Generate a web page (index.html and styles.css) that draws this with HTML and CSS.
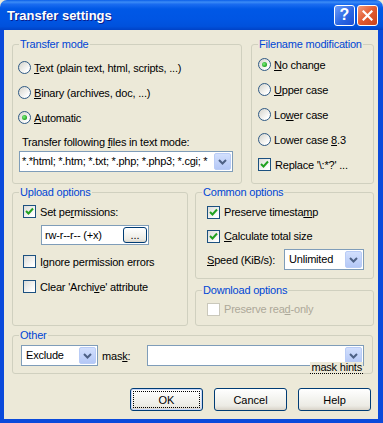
FILE: index.html
```html
<!DOCTYPE html>
<html lang="en">
<head>
    <meta charset="UTF-8">
    <title>Transfer settings</title>
    <link rel="stylesheet" href="styles.css">
</head>
<body>
    <div class="window">
        <div class="titlebar">
            <span class="title">Transfer settings</span>
            <div class="caption-buttons">
                <span class="cap-btn cap-help">?</span>
                <span class="cap-btn cap-close">
                    <svg width="11" height="11" viewBox="0 0 11 11"><path d="M1.5 1.5 L9.5 9.5 M9.5 1.5 L1.5 9.5" stroke="#fff" stroke-width="2.2" stroke-linecap="square"/></svg>
                </span>
            </div>
        </div>

        <div class="client">
            <!-- === Top row === -->
            <div class="row row-top">
                <fieldset class="group transfer-mode">
                    <legend>Transfer mode</legend>
                    <div class="body">
                        <div class="opt"><span class="radio"></span><span><u>T</u>ext (plain text, html, scripts, ...)</span></div>
                        <div class="opt"><span class="radio"></span><span><u>B</u>inary (archives, doc, ...)</span></div>
                        <div class="opt"><span class="radio on"><span class="dot"></span></span><span><u>A</u>utomatic</span></div>
                        <div class="field-label">Transfer following <u>f</u>iles in text mode:</div>
                        <div class="combo combo-mask">
                            <span class="combo-text">*.*html; *.htm; *.txt; *.php; *.php3; *.cgi; *</span>
                            <span class="drop"><svg width="9" height="6" viewBox="0 0 9 6"><path d="M1 1 L4.5 4.5 L8 1" fill="none" stroke="#4D6185" stroke-width="2"/></svg></span>
                        </div>
                    </div>
                </fieldset>

                <fieldset class="group filename">
                    <legend>Filename modification</legend>
                    <div class="body">
                        <div class="opt"><span class="radio on"><span class="dot"></span></span><span><u>N</u>o change</span></div>
                        <div class="opt"><span class="radio"></span><span><u>U</u>pper case</span></div>
                        <div class="opt"><span class="radio"></span><span>Lo<u>w</u>er case</span></div>
                        <div class="opt"><span class="radio"></span><span>Lower case <u>8</u>.3</span></div>
                        <div class="opt"><span class="check"><svg width="9" height="9" viewBox="0 0 9 9"><path d="M1 4 L3.5 6.5 L8 1.5" fill="none" stroke="#21A121" stroke-width="2"/></svg></span><span>Replace '\:*?' ...</span></div>
                    </div>
                </fieldset>
            </div>

            <!-- === Middle row === -->
            <div class="row row-mid">
                <fieldset class="group upload">
                    <legend>Upload options</legend>
                    <div class="body">
                        <div class="opt"><span class="check"><svg width="9" height="9" viewBox="0 0 9 9"><path d="M1 4 L3.5 6.5 L8 1.5" fill="none" stroke="#21A121" stroke-width="2"/></svg></span><span>Set pe<u>r</u>missions:</span></div>
                        <div class="perm">
                            <span>rw-r--r-- (+x)</span>
                            <button class="btn btn-dots">...</button>
                        </div>
                        <div class="opt opt-gap"><span class="check"></span><span>I<u>g</u>nore permission errors</span></div>
                        <div class="opt"><span class="check"></span><span>Clear 'Archi<u>v</u>e' attribute</span></div>
                    </div>
                </fieldset>

                <div class="side">
                    <fieldset class="group common">
                        <legend>Common options</legend>
                        <div class="body">
                            <div class="opt opt-sm"><span class="check"><svg width="9" height="9" viewBox="0 0 9 9"><path d="M1 4 L3.5 6.5 L8 1.5" fill="none" stroke="#21A121" stroke-width="2"/></svg></span><span>Preserve timesta<u>m</u>p</span></div>
                            <div class="opt opt-sm"><span class="check"><svg width="9" height="9" viewBox="0 0 9 9"><path d="M1 4 L3.5 6.5 L8 1.5" fill="none" stroke="#21A121" stroke-width="2"/></svg></span><span><u>C</u>alculate total size</span></div>
                            <div class="speed">
                                <span class="speed-label"><u>S</u>peed (KiB/s):</span>
                                <div class="combo combo-speed">
                                    <span class="combo-text">Unlimited</span>
                                    <span class="drop"><svg width="9" height="6" viewBox="0 0 9 6"><path d="M1 1 L4.5 4.5 L8 1" fill="none" stroke="#4D6185" stroke-width="2"/></svg></span>
                                </div>
                            </div>
                        </div>
                    </fieldset>

                    <fieldset class="group download">
                        <legend>Download options</legend>
                        <div class="body">
                            <div class="opt opt-sm disabled"><span class="check"></span><span>Preserve rea<u>d</u>-only</span></div>
                        </div>
                    </fieldset>
                </div>
            </div>

            <!-- === Other === -->
            <fieldset class="group other">
                <legend>Other</legend>
                <div class="body">
                    <div class="combo combo-exclude">
                        <span class="combo-text">Exclude</span>
                        <span class="drop"><svg width="9" height="6" viewBox="0 0 9 6"><path d="M1 1 L4.5 4.5 L8 1" fill="none" stroke="#4D6185" stroke-width="2"/></svg></span>
                    </div>
                    <span class="mask-label">mas<u>k</u>:</span>
                    <div class="combo combo-filemask">
                        <span class="combo-text"></span>
                        <span class="drop"><svg width="9" height="6" viewBox="0 0 9 6"><path d="M1 1 L4.5 4.5 L8 1" fill="none" stroke="#4D6185" stroke-width="2"/></svg></span>
                    </div>
                </div>
                <span class="hints">mask hints</span>
            </fieldset>

            <!-- === Buttons === -->
            <div class="buttons">
                <button class="btn btn-default">OK</button>
                <button class="btn">Cancel</button>
                <button class="btn">Help</button>
            </div>
        </div>
    </div>
</body>
</html>
```

FILE: styles.css
```css
body {
    margin: 0;
    font-family: "Liberation Sans", Arial, sans-serif;
    font-size: 11px;
    letter-spacing: -0.2px;
    color: #000;
    background: #ECE9D8;
}

/* === Window frame === */
.window {
    width: 383px;
    height: 423px;
    display: flex;
    flex-direction: column;
}

.titlebar {
    height: 30px;
    flex: none;
    box-sizing: border-box;
    display: flex;
    align-items: center;
    justify-content: space-between;
    padding: 0 5px 0 7px;
    border-radius: 7px 7px 0 0;
    background: linear-gradient(to bottom, #0A5EE8 0%, #3C8CF6 7%, #1A6CF0 14%, #0058E6 30%, #0055E3 65%, #0051DC 88%, #0042C6 100%);
}

.title {
    color: #fff;
    font-weight: bold;
    font-size: 13px;
    letter-spacing: 0;
    text-shadow: 1px 1px #0A1D8C;
    margin-top: 1px;
}

.caption-buttons {
    display: flex;
    gap: 2px;
}

.cap-btn {
    width: 21px;
    height: 21px;
    box-sizing: border-box;
    border: 1px solid #fff;
    border-radius: 3px;
    display: flex;
    align-items: center;
    justify-content: center;
    color: #fff;
    font-weight: bold;
    font-size: 16px;
    letter-spacing: 0;
}

.cap-help {
    background: linear-gradient(135deg, #6E9CF8, #2B67E4 55%, #1C4FD3);
}

.cap-close {
    background: linear-gradient(135deg, #F19A7C, #E25A2F 50%, #C9431C);
}

.client {
    flex: 1;
    background: #ECE9D8;
    border: solid #0A4ADB;
    border-width: 0 5px 4px 4px;
    padding: 8px 0 0 8px;
    display: flex;
    flex-direction: column;
}

/* === Group boxes === */
.row {
    display: flex;
}

.row-top {
    gap: 9px;
    height: 146px;
}

.row-mid {
    gap: 7px;
    height: 140px;
    margin-top: 2px;
}

.side {
    display: flex;
    flex-direction: column;
    gap: 5px;
}

.group {
    margin: 0;
    padding: 0;
    min-width: 0;
    box-sizing: border-box;
    border: 1px solid #D0D0BF;
    border-radius: 3px;
}

.group legend {
    color: #0046D5;
    margin-left: 6px;
    padding: 0 1px;
    line-height: 13px;
}

.transfer-mode { width: 230px; }
.transfer-mode .body { padding: 4px 0 0 5px; }

.filename { width: 123px; }
.filename .body { padding: 1px 0 0 6px; }

.upload { width: 176px; }
.upload .body { padding: 0 0 0 10px; }

.common { width: 179px; height: 93px; }
.common .body { padding: 1px 0 0 11px; }

.download { width: 179px; height: 42px; }
.download .body { padding: 0 0 0 11px; }

.other {
    width: 361px;
    height: 45px;
    margin-top: 3px;
    position: relative;
}

.other .body {
    display: flex;
    align-items: center;
    padding: 3px 0 0 8px;
}

/* === Options === */
.opt {
    display: flex;
    align-items: center;
    gap: 4px;
    height: 25px;
}

.opt-sm {
    height: 24px;
}

.opt-gap {
    margin-top: 4px;
}

.disabled {
    color: #ACA899;
}

.radio {
    width: 13px;
    height: 13px;
    flex: none;
    box-sizing: border-box;
    border: 1px solid #2F5A85;
    border-radius: 50%;
    background: linear-gradient(135deg, #D4D3CB, #FFFFFF 80%);
    display: flex;
    align-items: center;
    justify-content: center;
    margin-right: -1px;
}

.dot {
    width: 5px;
    height: 5px;
    border-radius: 50%;
    background: radial-gradient(circle at 40% 40%, #7BF07B, #21A121 70%);
}

.check {
    width: 13px;
    height: 13px;
    flex: none;
    box-sizing: border-box;
    border: 1px solid #1C5180;
    background: linear-gradient(135deg, #DCDCD7, #FFFFFF 85%);
    display: flex;
    align-items: center;
    justify-content: center;
}

.disabled .check {
    border-color: #CAC8BB;
    background: #fff;
}

.field-label {
    margin: 6px 0 2px 4px;
    line-height: 13px;
}

/* === Combo boxes === */
.combo {
    display: flex;
    box-sizing: border-box;
    height: 21px;
    border: 1px solid #7F9DB9;
    background: #fff;
}

.combo-text {
    flex: 1;
    overflow: hidden;
    white-space: nowrap;
    padding-left: 3px;
    line-height: 19px;
}

.drop {
    flex: none;
    width: 17px;
    margin: 1px;
    box-sizing: border-box;
    border: 1px solid #B9CCF6;
    border-radius: 2px;
    background: linear-gradient(to bottom, #D2DFFD, #B4C8F6);
    display: flex;
    align-items: center;
    justify-content: center;
}

.combo-mask {
    width: 214px;
    margin-left: 1px;
}

.combo-mask .combo-text {
    padding-left: 2px;
    letter-spacing: -0.25px;
}

.speed {
    display: flex;
    align-items: center;
    margin-top: 1px;
}

.speed-label {
    width: 77px;
}

.combo-speed {
    width: 80px;
}

.combo-speed .combo-text {
    padding-left: 4px;
}

.combo-exclude {
    width: 77px;
}

.combo-exclude .combo-text {
    padding-left: 4px;
}

.mask-label {
    margin-left: 4px;
}

.combo-filemask {
    width: 217px;
    margin: 0 8px 0 auto;
}

.hints {
    position: absolute;
    right: 9px;
    bottom: -8px;
    line-height: 11px;
    padding: 0 1px;
    background: #ECE9D8;
    border-bottom: 1px dotted #000;
}

/* === Permissions field === */
.perm {
    display: flex;
    align-items: center;
    box-sizing: border-box;
    width: 108px;
    height: 20px;
    margin: 1px 0 0 18px;
    padding-left: 3px;
    border: 1px solid #7F9DB9;
    background: #fff;
}

/* === Buttons === */
.btn {
    width: 73px;
    height: 23px;
    box-sizing: border-box;
    padding: 0;
    border: 1px solid #003C74;
    border-radius: 3px;
    background: linear-gradient(to bottom, #FFFFFF, #F4F4F0 45%, #ECEBE4 80%, #D8D3C8);
    font-family: inherit;
    font-size: 11px;
    letter-spacing: 0;
    color: #000;
}

.btn-default {
    box-shadow: inset 0 0 0 1px #C6D6FA;
    outline: 1px dotted #000;
    outline-offset: -4px;
}

.btn-dots {
    width: 24px;
    height: 16px;
    margin: 0 1px 0 auto;
    line-height: 10px;
}

.buttons {
    display: flex;
    justify-content: flex-end;
    gap: 11px;
    margin-top: 14px;
    padding-right: 7px;
}
```
